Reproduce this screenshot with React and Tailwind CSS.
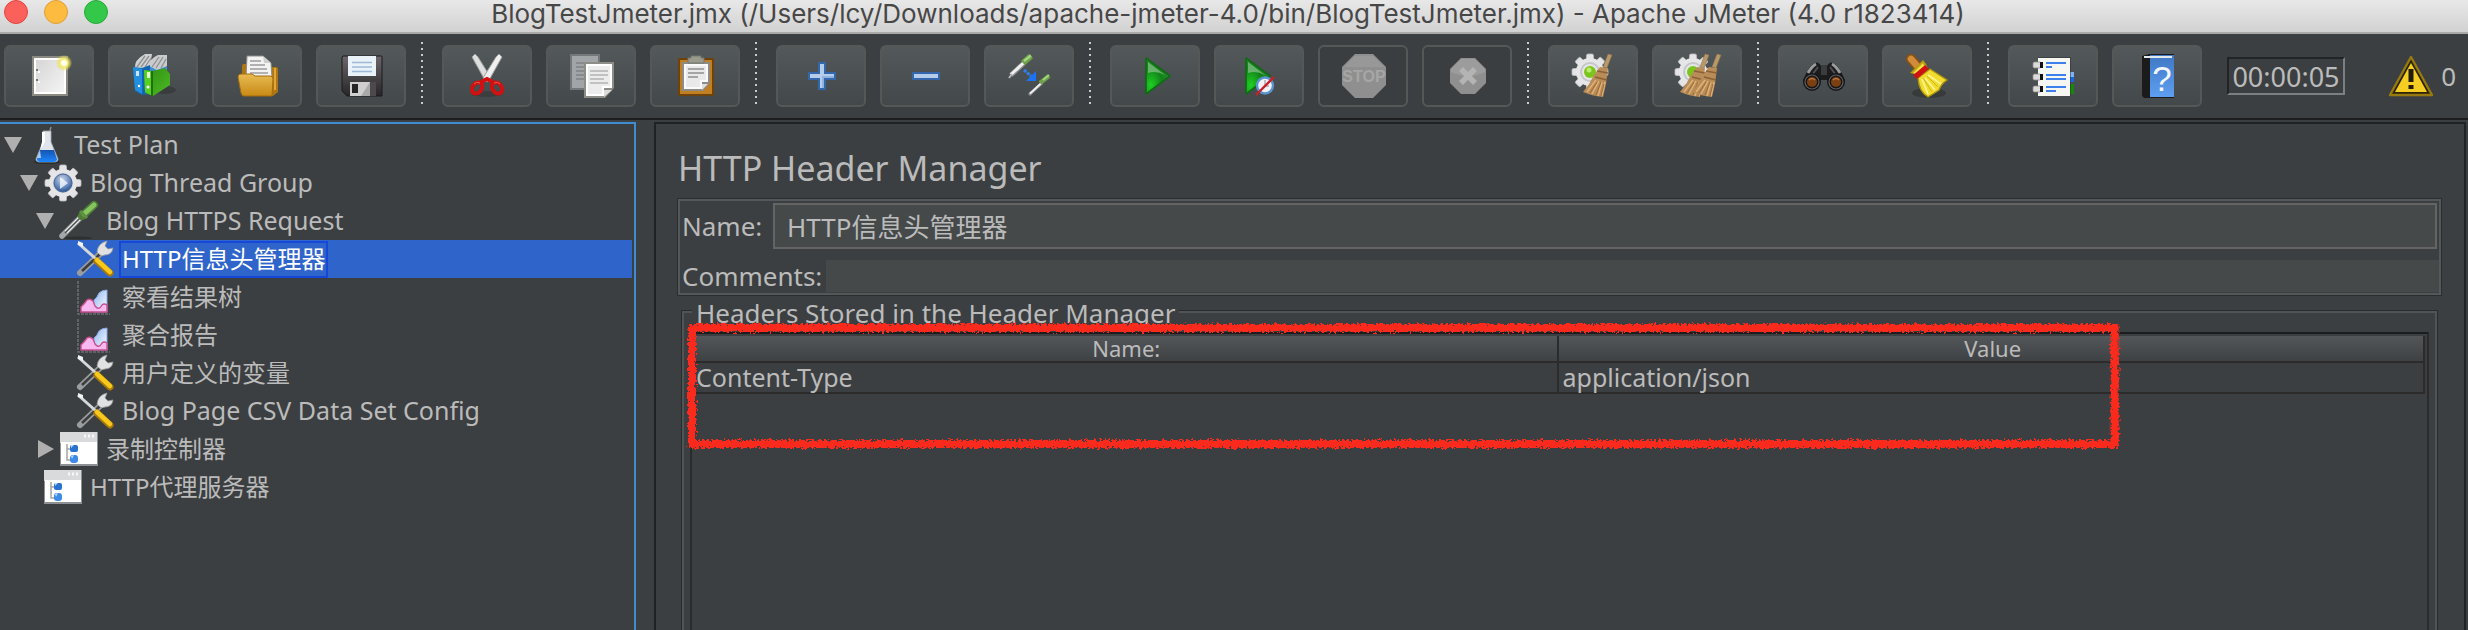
import React from "react";

const uiFont = "font-['Noto_Sans','Noto_Sans_CJK_SC',sans-serif]";

/* ---------- shared drawing parts ---------- */

function Icon({ children, size = "size-11", box = "0 0 44 44" }) {
  return (
    <svg viewBox={box} className={`${size} shrink-0 overflow-visible`} aria-hidden="true">
      {children}
    </svg>
  );
}

function Gear({ cx, cy, r }) {
  const teeth = [0, 45, 90, 135, 180, 225, 270, 315];
  return (
    <g transform={`translate(${cx} ${cy}) scale(${r / 18})`}>
      {teeth.map((a) => (
        <rect key={a} x="-3.5" y="-18" width="7" height="10" rx="1.5" fill="#e4e4e6" stroke="#bcbec0" strokeWidth="0.8" transform={`rotate(${a})`} />
      ))}
      <circle r="14" fill="#e6e6e8" />
      <circle r="9" fill="none" stroke="#c4c6c8" strokeWidth="2" />
    </g>
  );
}

function StrawBroom({ x }) {
  return (
    <g transform={`translate(${x} 0)`}>
      <path d="M38 0 L42 1 L37 14 L33 13 Z" fill="#b8996b" stroke="#8d7148" strokeWidth="0.6" />
      <path d="M30 13 L38 14 L36 30 L33 43 Q22 42 13 38 Q20 30 24 21 Z" fill="#b98c58" />
      <path d="M27 17 L38 19 M25 23 L37 26" stroke="#8a6236" strokeWidth="1.4" />
      <path d="M26 26 L17 38 M29 27 L22 40 M32 28 L28 42 M35 28 L32 42" stroke="#e0b377" strokeWidth="1.4" />
      <path d="M27 28 L20 39 M31 28 L26 41 M34 30 L31 42" stroke="#99693a" strokeWidth="0.9" />
    </g>
  );
}

function PlayShape({ x }) {
  return (
    <g transform={`translate(${x} 0)`}>
      <path d="M0 4 L24 22 L0 40 Z" fill="url(#play)" stroke="#116a14" strokeWidth="1.6" strokeLinejoin="round" />
      <path d="M2 8 L19 21 Q10 16 2 19 Z" fill="#8cc48e" opacity="0.7" />
    </g>
  );
}

function Defs() {
  return (
    <svg className="absolute size-0" aria-hidden="true">
      <defs>
        <linearGradient id="paper" x1="0" y1="0" x2="1" y2="1">
          <stop offset="0" stopColor="#d6d6d6" />
          <stop offset="1" stopColor="#f4f4f4" />
        </linearGradient>
        <linearGradient id="folder" x1="0" y1="0" x2="0" y2="1">
          <stop offset="0" stopColor="#e8bb54" />
          <stop offset="1" stopColor="#c88a14" />
        </linearGradient>
        <linearGradient id="floppy" x1="0" y1="0" x2="0" y2="1">
          <stop offset="0" stopColor="#6b676a" />
          <stop offset="1" stopColor="#272527" />
        </linearGradient>
        <radialGradient id="play" cx="0.2" cy="0.75" r="0.8">
          <stop offset="0" stopColor="#1fd023" />
          <stop offset="0.6" stopColor="#12821a" />
          <stop offset="1" stopColor="#2a8a2e" />
        </radialGradient>
        <linearGradient id="greenBook" x1="0" y1="0" x2="1" y2="1">
          <stop offset="0" stopColor="#2c8d12" />
          <stop offset="1" stopColor="#4fbb24" />
        </linearGradient>
        <linearGradient id="helpBook" x1="0" y1="0" x2="0" y2="1">
          <stop offset="0" stopColor="#3f78c4" />
          <stop offset="1" stopColor="#5e9ef0" />
        </linearGradient>
        <radialGradient id="glow">
          <stop offset="0" stopColor="#fffde0" />
          <stop offset="0.5" stopColor="#f3ea70" />
          <stop offset="1" stopColor="#e8dc40" stopOpacity="0.1" />
        </radialGradient>
        <linearGradient id="water" x1="0" y1="0" x2="0" y2="1">
          <stop offset="0" stopColor="#1554b0" />
          <stop offset="1" stopColor="#1f86ff" />
        </linearGradient>
        <radialGradient id="orb" cx="0.45" cy="0.3" r="0.8">
          <stop offset="0" stopColor="#c9d4e6" />
          <stop offset="0.6" stopColor="#5f82b8" />
          <stop offset="1" stopColor="#16407f" />
        </radialGradient>
        <linearGradient id="peak" x1="0" y1="0" x2="1" y2="1">
          <stop offset="0" stopColor="#8fb6f0" />
          <stop offset="1" stopColor="#ffffff" />
        </linearGradient>
        <filter id="rough" x="-2%" y="-10%" width="104%" height="120%" filterUnits="objectBoundingBox">
          <feTurbulence type="fractalNoise" baseFrequency="0.4" numOctaves="2" seed="4" result="n" />
          <feDisplacementMap in="SourceGraphic" in2="n" scale="7" xChannelSelector="R" yChannelSelector="G" />
        </filter>
      </defs>
    </svg>
  );
}

/* ---------- toolbar icons ---------- */

const NewIcon = () => (
  <Icon>
    <rect x="5" y="2" width="36" height="40" fill="#8b8b82" />
    <rect x="7" y="4" width="32" height="36" fill="#fff" />
    <rect x="9" y="6" width="28" height="32" fill="url(#paper)" />
    <path d="M9 15h2v2h-2zM9 25h2v2h-2z" fill="#777" />
    <path d="M11 17h2v2h-2zM11 27h2v2h-2z" fill="#fff" />
    <circle cx="37" cy="9" r="8" fill="url(#glow)" />
    <circle cx="37" cy="9" r="3" fill="#fffef0" />
  </Icon>
);

const TemplatesIcon = () => (
  <Icon>
    <ellipse cx="34" cy="36" rx="11" ry="4" fill="#222" opacity="0.35" />
    <path d="M17 12 L36 8 L36 18 L18 22 Z" fill="#3d8fd0" />
    <path d="M4 14 Q3 6 14 0 H21 L19 12 L6 16 Z" fill="#cfd1d2" />
    <path d="M18 12 Q18 5 27 1 H36 V12 L26 16 Z" fill="#c9cbcd" />
    <path d="M6 13 L14 2 M10 13 L18 2 M14 13 L20 4 M21 13 L28 3 M25 14 L32 3 M30 14 L35 5" stroke="#8e9193" strokeWidth="1.3" />
    <path d="M2 13 L11 14 L19 11 L19 40 L11 41 L4 37 Z" fill="#1166b4" />
    <path d="M2 13 L11 15 L11 40 L4 36 Z" fill="#2490dd" />
    <path d="M5 17h3v5h-3z" fill="#cbe6fb" />
    <path d="M13 16 L22 17 L34 14 L39 20 V31 L22 42 L14 39 Z" fill="url(#greenBook)" />
    <path d="M13 16 L20 17 L20 41 L14 38 Z" fill="#58cf24" />
    <path d="M16 18h3v6h-3z" fill="#e4ffd2" />
    <circle cx="17" cy="33" r="1.500" fill="#fff" />
    <circle cx="8" cy="32" r="1.200" fill="#fff" />
    <path d="M21 17 V42" stroke="#1c6d0b" strokeWidth="1.800" />
  </Icon>
);

const OpenIcon = () => (
  <Icon>
    <path d="M7 12 Q7 10 9 10 H17 L20 13 H41 Q43 13 43 15 L43 38 L38 42 H7 Z" fill="#b07612" />
    <path d="M40 14 V36" stroke="#e0a63a" strokeWidth="2" />
    <path d="M12 2 H28 L36 9 L37 24 H11 Z" fill="#f3f3f3" stroke="#8d8d85" strokeWidth="1" />
    <path d="M15 7 H26 M15 11 H30 M15 15 H32 M15 19 H33" stroke="#9c9c9c" strokeWidth="1.5" />
    <path d="M28 2 L29 9 L36 9 Z" fill="#cfcfcf" />
    <path d="M3 23 Q3 20 6 20 H17 L20 22 H35 Q38 22 38 25 L37 42 H9 Q7 42 6 39 Z" fill="url(#folder)" stroke="#a46c0c" strokeWidth="1" />
  </Icon>
);

const SaveIcon = () => (
  <Icon>
    <path d="M4 2 H42 Q43 2 43 3 V42 H8 L3 37 V3 Z" fill="url(#floppy)" stroke="#1c1a1c" strokeWidth="1" />
    <rect x="9" y="2" width="28" height="20" fill="#e9f1f9" />
    <path d="M13 8.500 H33 M13 13 H33 M13 17.500 H33" stroke="#9db9d6" strokeWidth="1.6" />
    <rect x="11" y="28" width="20" height="14" fill="#cfcfcf" />
    <rect x="31" y="28" width="6" height="14" fill="#4b494b" />
    <rect x="13" y="30" width="6" height="9" fill="#262426" />
    <path d="M22 42 L31 28 V42 Z" fill="#a9a9a9" />
  </Icon>
);

const CutIcon = () => (
  <Icon>
    <ellipse cx="22" cy="40" rx="15" ry="3" fill="#222" opacity="0.3" />
    <path d="M7 3 L10 0 L13 3 L26 24 L21 28 Z" fill="#dcdedf" stroke="#9fa09b" strokeWidth="1" />
    <path d="M37 3 L34 0 L31 3 L18 24 L23 28 Z" fill="#efefef" stroke="#9fa09b" strokeWidth="1" />
    <ellipse cx="12" cy="34" rx="4.500" ry="6" fill="none" stroke="#d40f0f" strokeWidth="4" transform="rotate(35 12 34)" />
    <ellipse cx="32" cy="34" rx="4.500" ry="6" fill="none" stroke="#d40f0f" strokeWidth="4" transform="rotate(-35 32 34)" />
    <path d="M16 28 L22 25 L28 28" fill="none" stroke="#d40f0f" strokeWidth="4" />
    <path d="M9 30 Q11 27 15 29 M35 30 Q33 27 29 29" fill="none" stroke="#f05a50" strokeWidth="1" />
  </Icon>
);

const CopyIcon = () => (
  <Icon>
    <rect x="1" y="0" width="30" height="36" fill="#74787a" />
    <rect x="3" y="2" width="26" height="32" fill="#a2a5a7" />
    <path d="M7 9 H20 M7 13 H20 M7 17 H15 M7 21 H15 M7 25 H15" stroke="#7f8385" strokeWidth="1.4" />
    <path d="M15 8 H45 V34 L36 44 H15 Z" fill="#8d8d87" />
    <path d="M17 10 H43 V34 H35 V42 H17 Z" fill="#fff" />
    <path d="M19 12 H41 V32 H33 V40 H19 Z" fill="#ececec" />
    <path d="M35 36 H43 L35 43 Z" fill="#dcdcdc" />
    <path d="M21 17 H39 M21 21 H39 M21 25 H35 M21 29 H39" stroke="#b3b3b3" strokeWidth="1.6" />
  </Icon>
);

const PasteIcon = () => (
  <Icon>
    <rect x="5" y="4" width="36" height="38" rx="1" fill="#6e420b" />
    <rect x="7" y="6" width="32" height="34" fill="#c07f22" />
    <path d="M9 8 H37 V29 L30 37 H9 Z" fill="#8d8d87" />
    <path d="M11 10 H35 V28 H29 V35 H11 Z" fill="#fafafa" />
    <path d="M13 12 H33 V26 H27 V33 H13 Z" fill="#e9e9e9" />
    <path d="M29 30 H35 L29 36 Z" fill="#dedede" />
    <path d="M15 15 H31 M15 19 H31 M15 23 H25" stroke="#8f8f8f" strokeWidth="1.6" />
    <path d="M18 2 H28 V4 H31 V9 H15 V4 H18 Z" fill="#9a9b8e" stroke="#77786c" strokeWidth="1" />
  </Icon>
);

const PlusIcon = () => (
  <Icon>
    <path d="M19 8 H27 V18 H37 V26 H27 V36 H19 V26 H9 V18 H19 Z" fill="#3366ab" />
    <path d="M21 10 H25 V20 H35 V24 H25 V34 H21 V24 H11 V20 H21 Z" fill="#b3cdea" />
    <path d="M23 22 H35 V24 H25 V34 H23 Z" fill="#8fb3dd" />
  </Icon>
);

const MinusIcon = () => (
  <Icon>
    <rect x="9" y="18" width="28" height="8" fill="#3366ab" />
    <rect x="11" y="20" width="24" height="4" fill="#b3cdea" />
  </Icon>
);

const ToggleIcon = () => (
  <Icon>
    <path d="M4 21 L17 9" stroke="#8d9091" strokeWidth="5" />
    <path d="M4 20.500 L17 8.500" stroke="#efefef" strokeWidth="3" />
    <path d="M16 9 L24 2" stroke="#6ea04c" strokeWidth="6" />
    <path d="M17 7 L24 1.500" stroke="#a3d67c" strokeWidth="2.500" />
    <path d="M2 24 L5 20" stroke="#b5b7b8" strokeWidth="2" />
    <path d="M17 16 L24 22" stroke="#2f7ff0" strokeWidth="3" strokeDasharray="3 1" />
    <path d="M29 17 L29 27 L19 27 Z" fill="#1b72f2" />
    <path d="M22 41 L35 29" stroke="#8d9091" strokeWidth="3" />
    <path d="M23 39.500 L35 28.500" stroke="#efefef" strokeWidth="2" />
    <path d="M33 29 L42 22" stroke="#6ea04c" strokeWidth="4.500" />
    <path d="M36 26 L42 21" stroke="#a3d67c" strokeWidth="2" />
  </Icon>
);

const StartIcon = () => (
  <Icon>
    <PlayShape x={13} />
  </Icon>
);

const StartNoPauseIcon = () => (
  <Icon>
    <PlayShape x={9} />
    <circle cx="28" cy="31.500" r="8" fill="#f1f3f6" stroke="#5b93cf" strokeWidth="2.400" />
    <path d="M28 26 V32 H32" fill="none" stroke="#a9b0b8" strokeWidth="1.500" />
    <path d="M19 41 L37 23" stroke="#c9202a" strokeWidth="2.400" />
  </Icon>
);

const StopIcon = () => (
  <Icon>
    <path d="M14 0 H32 L45 13 V31 L32 44 H14 L1 31 V13 Z" fill="#8f8f8f" />
    <path d="M14 2 H32 L43 13 H3 Z" fill="#989898" />
    <text x="23" y="28" textAnchor="middle" fontFamily="Liberation Sans Narrow, Liberation Sans" fontWeight="bold" fontSize="16" fill="#a6a6a6">STOP</text>
  </Icon>
);

const ShutdownIcon = () => (
  <Icon>
    <path d="M16 4 H30 L41 15 V29 L30 40 H16 L5 29 V15 Z" fill="#8f8f8f" />
    <path d="M16 5 H30 L40 15 V18 Q23 26 6 18 V15 Z" fill="#9c9c9c" />
    <path d="M16 15 L30 29 M30 15 L16 29" stroke="#b4b4b4" strokeWidth="5.500" />
  </Icon>
);

const ClearIcon = () => (
  <Icon>
    <Gear cx={19} cy={18} r={18} />
    <circle cx="19" cy="18" r="6" fill="#7cc51e" />
    <circle cx="18" cy="16" r="2.500" fill="#b9ec6a" />
    <StrawBroom x={-1} />
  </Icon>
);

const ClearAllIcon = () => (
  <Icon>
    <Gear cx={18} cy={18} r={18} />
    <circle cx="18" cy="18" r="6" fill="#7cc51e" />
    <StrawBroom x={-8} />
    <StrawBroom x={4} />
  </Icon>
);

const SearchIcon = () => (
  <Icon>
    <path d="M2 27 Q6 15 12 10 Q17 6 20 12 H26 Q29 6 34 10 Q40 15 44 27 L36 36 L27 26 H19 L10 36 Z" fill="#1c1c1d" />
    <path d="M7 19 Q11 12 15 10 M39 19 Q35 12 31 10" stroke="#9a9b9c" strokeWidth="3" fill="none" />
    <path d="M11 21 L17 13 M35 21 L29 13" stroke="#4f5052" strokeWidth="2" />
    <rect x="20" y="11" width="6" height="10" fill="#3b3c3d" />
    <circle cx="11" cy="28" r="9" fill="#161617" />
    <circle cx="35" cy="28" r="9" fill="#161617" />
    <circle cx="11" cy="28" r="7" fill="none" stroke="#5e5f61" strokeWidth="1.200" />
    <circle cx="35" cy="28" r="7" fill="none" stroke="#5e5f61" strokeWidth="1.200" />
    <circle cx="11" cy="28" r="5" fill="#7c3f10" />
    <circle cx="35" cy="28" r="5" fill="#7c3f10" />
    <path d="M8 26 Q11 23 14 26 M32 26 Q35 23 38 26" stroke="#b8743c" strokeWidth="1.600" fill="none" />
  </Icon>
);

const ResetSearchIcon = () => (
  <Icon>
    <ellipse cx="24" cy="39" rx="17" ry="5" fill="#222" opacity="0.4" />
    <path d="M6 5 L14 14" stroke="#8a5210" strokeWidth="10" strokeLinecap="round" />
    <path d="M6 5 L14 14" stroke="#d08c3a" strokeWidth="6.500" strokeLinecap="round" />
    <path d="M5 19 L18 6 L21 10 L23 15 L14 24 L9 20 Z" fill="#b99f10" />
    <path d="M8 19 L18 9 L20 14 L13 20 Z" fill="#f0dc3c" />
    <path d="M13 24 L25 15 L42 26 Q36 30 34 36 L23 43 Q14 38 13 24 Z" fill="#f1dc2f" stroke="#a8920e" strokeWidth="1.400" />
    <path d="M17 25 L23 40 M20 24 L30 36 M23 21 L36 30" stroke="#fff58a" strokeWidth="1.800" />
    <path d="M18 24 L27 38 M22 22 L33 33" stroke="#c9ae14" strokeWidth="0.900" />
    <path d="M10 23 L22 13" stroke="#cf1111" strokeWidth="5.500" />
  </Icon>
);

const LogIcon = () => (
  <Icon>
    <rect x="38" y="18" width="5" height="5" fill="#7fb2f5" />
    <rect x="38" y="23" width="5" height="5" fill="#1b67e0" />
    <rect x="38" y="30" width="5" height="10" fill="#16860f" />
    <rect x="7" y="3" width="33" height="39" fill="#2b2b2b" opacity="0.5" />
    <rect x="7" y="4" width="32" height="38" fill="#f6f6f2" />
    <path d="M15 9 H35 M15 13 H21 M15 21 H35 M15 25 H35 M15 33 H35 M15 37 H25" stroke="#3d7fec" strokeWidth="2" />
    {[11, 23, 35].map((y) => (
      <g key={y}>
        <rect x="2" y={y - 3} width="8" height="6" rx="1.500" fill="#dcdada" stroke="#8d8b8b" strokeWidth="0.800" />
        <rect x="9" y={y - 3} width="3" height="6" fill="#111" />
      </g>
    ))}
  </Icon>
);

const HelpIcon = () => (
  <Icon>
    <path d="M7 2 L14 0 H39 V44 H9 L7 42 Z" fill="#1b1b1c" />
    <rect x="15" y="1" width="24" height="42" fill="url(#helpBook)" />
    <path d="M9 3 H37" stroke="#e3e8ee" strokeWidth="2" />
    <text x="27" y="37" textAnchor="middle" fontFamily="Liberation Sans" fontSize="35" fill="#f2f6fb">?</text>
  </Icon>
);

const WarningIcon = () => (
  <Icon>
    <path d="M22 3 L43 41 H1 Z" fill="#2b2406" stroke="#96790f" strokeWidth="2.400" strokeLinejoin="round" />
    <path d="M22 9 L38 38 H6 Z" fill="#f6cd22" />
    <path d="M19.500 15 H24.500 V28 H19.500 Z" fill="#211c0c" />
    <rect x="19.500" y="31" width="5" height="4" fill="#211c0c" />
  </Icon>
);

/* ---------- tree icons ---------- */

const FlaskIcon = () => (
  <Icon size="size-[38px]" box="0 0 38 38">
    <ellipse cx="19" cy="36" rx="13" ry="2" fill="#1d1f20" opacity="0.6" />
    <path d="M23 1 L21 8" stroke="#8d9091" strokeWidth="1.400" />
    <path d="M15 5 H23 V16 L30 33 Q30 36 27 36 H11 Q8 36 8 33 L15 16 Z" fill="#dfe5ea" stroke="#9fa8ad" strokeWidth="0.800" />
    <path d="M14 6 H17 V16 L12 24 L14 16 Z" fill="#fff" />
    <path d="M12 24 H26 L29 33 Q29 36 26 36 H12 Q9 36 9 33 Z" fill="url(#water)" />
    <path d="M12 24 L9 32 L13 32 Z" fill="#a9cdf8" />
  </Icon>
);

const ThreadIcon = () => (
  <Icon size="size-[38px]" box="0 0 38 38">
    <Gear cx={19} cy={19} r={18} />
    <circle cx="19" cy="19" r="9" fill="url(#orb)" stroke="#45659a" strokeWidth="1" />
    <path d="M16 13 L24 19 L16 25 Z" fill="#f5f8fc" opacity="0.8" />
  </Icon>
);

const DropperIcon = () => (
  <Icon size="size-[38px]" box="0 0 38 38">
    <ellipse cx="18" cy="36" rx="14" ry="1.500" fill="#1d1f20" opacity="0.5" />
    <path d="M2 34 L23 13" stroke="#a4a7a8" strokeWidth="5.500" strokeLinecap="round" />
    <path d="M6 30 L24 12" stroke="#f3f3f3" strokeWidth="3.500" />
    <path d="M5 31 L20 16" stroke="#4b4f51" strokeWidth="1.600" />
    <path d="M22 14 L34 3" stroke="#4d7d36" strokeWidth="8" strokeLinecap="round" />
    <path d="M24 12 L34 3" stroke="#86c45f" strokeWidth="5" strokeLinecap="round" />
    <path d="M20 9 L27 16" stroke="#5d8f41" strokeWidth="3" />
  </Icon>
);

const ToolsIcon = () => (
  <Icon size="size-[38px]" box="0 0 38 38">
    <path d="M4 33 L27 11" stroke="#9a9c9d" strokeWidth="6" strokeLinecap="round" />
    <path d="M6 31 L24 14" stroke="#3b3d3e" strokeWidth="2.500" />
    <path d="M21 12 Q22 3 31 1 L29 6 L32 9 L37 8 Q36 15 29 15 Q25 17 23 14 Z" fill="#dfe1e2" stroke="#97999a" strokeWidth="0.800" />
    <path d="M2 3 L20 19" stroke="#d5d7d8" strokeWidth="3" />
    <path d="M2 1 L7 3 L7 7 L2 5 Z" fill="#f2f2f2" />
    <path d="M21 21 L34 33" stroke="#a87a0a" strokeWidth="7" strokeLinecap="round" />
    <path d="M21 20 L34 32" stroke="#f8c91c" strokeWidth="4.500" strokeLinecap="round" />
  </Icon>
);

const ChartIcon = () => (
  <Icon size="size-[38px]" box="0 0 38 38">
    <path d="M2 3 V36 H34" fill="none" stroke="#6a6d6f" strokeWidth="1.600" strokeDasharray="3 1" />
    <path d="M18 34 V22 Q21 20 23 15 Q26 12 31 12 V34 Z" fill="url(#peak)" stroke="#86a6e6" strokeWidth="1" />
    <path d="M5 34 V29 Q9 25 11 22 Q14 20 17 23 L19 28 Q23 33 26 27 Q28 25 31 27 V34 Z" fill="#f9b9f0" stroke="#c8508e" strokeWidth="1.400" />
  </Icon>
);

const WindowIcon = () => (
  <Icon size="size-[38px]" box="0 0 38 38">
    <rect x="0" y="2" width="38" height="34" fill="#8d9094" />
    <rect x="0" y="2" width="37" height="11" fill="#d9dadc" />
    <path d="M24 6 H26 M28 6 H30 M32 6 H34" stroke="#f7f7f7" strokeWidth="3" />
    <rect x="1" y="12" width="36" height="22" fill="#fff" />
    <path d="M7 14 V30 H12 M7 19 H12" fill="none" stroke="#a3a5a8" strokeWidth="1.500" />
    <rect x="10" y="15" width="8" height="7" rx="2" fill="#2a72cf" />
    <rect x="10" y="25" width="8" height="8" rx="3" fill="#3d8be8" />
    <path d="M11 15 L14 15 L11 18 Z M11 26 L14 25 L12 29 Z" fill="#b8dafc" />
  </Icon>
);

/* ---------- toolbar ---------- */

const toolGroups = [
  [["New", NewIcon], ["Templates", TemplatesIcon], ["Open", OpenIcon], ["Save", SaveIcon]],
  [["Cut", CutIcon], ["Copy", CopyIcon], ["Paste", PasteIcon]],
  [["Expand all", PlusIcon], ["Collapse all", MinusIcon], ["Toggle", ToggleIcon]],
  [["Start", StartIcon], ["Start no pauses", StartNoPauseIcon], ["Stop", StopIcon, true], ["Shutdown", ShutdownIcon, true]],
  [["Clear", ClearIcon], ["Clear all", ClearAllIcon]],
  [["Search", SearchIcon], ["Reset search", ResetSearchIcon]],
  [["Function helper", LogIcon], ["Help", HelpIcon]],
];

function ToolButton({ label, Glyph, disabled }) {
  return (
    <button
      type="button"
      aria-label={label}
      disabled={disabled}
      className="flex h-[62px] w-[90px] shrink-0 items-center justify-center rounded-md border-2 border-[#565757] bg-linear-to-b from-[#53585a] to-[#43484a] disabled:from-[#3b3e40] disabled:to-[#3b3e40]"
    >
      <Glyph />
    </button>
  );
}

function Toolbar() {
  return (
    <div role="toolbar" aria-label="Main" className="flex h-[86px] shrink-0 items-center border-b-2 border-[#1b1d1f] bg-[#3c3f41] pl-1">
      {toolGroups.map((group, g) => (
        <React.Fragment key={g}>
          {g > 0 && (
            <span className="mt-2 mr-[19px] ml-[15px] h-[62px] w-0.5 shrink-0 self-start bg-[repeating-linear-gradient(to_bottom,#c9cbcc_0px,#c9cbcc_2px,transparent_2px,transparent_6px)]" />
          )}
          <div className="flex gap-3.5">
            {group.map(([label, Glyph, disabled]) => (
              <ToolButton key={label} label={label} Glyph={Glyph} disabled={disabled} />
            ))}
          </div>
        </React.Fragment>
      ))}
      <output className="ml-[25px] flex h-[38px] w-[118px] shrink-0 items-center justify-center border-2 border-t-[#212324] border-r-[#7b8083] border-b-[#7b8083] border-l-[#212324] text-[27px] leading-none">
        00:00:05
      </output>
      <div className="ml-auto flex shrink-0 items-center gap-2 pr-3 text-[26px] leading-none">
        <WarningIcon />
        <span>0</span>
      </div>
    </div>
  );
}

/* ---------- tree ---------- */

const treeRows = [
  { level: 0, label: "Test Plan", Glyph: FlaskIcon, arrow: "open" },
  { level: 1, label: "Blog Thread Group", Glyph: ThreadIcon, arrow: "open" },
  { level: 2, label: "Blog HTTPS Request", Glyph: DropperIcon, arrow: "open" },
  { level: 3, label: "HTTP信息头管理器", Glyph: ToolsIcon, selected: true, cjk: true },
  { level: 3, label: "察看结果树", Glyph: ChartIcon, cjk: true },
  { level: 3, label: "聚合报告", Glyph: ChartIcon, cjk: true },
  { level: 3, label: "用户定义的变量", Glyph: ToolsIcon, cjk: true },
  { level: 3, label: "Blog Page CSV Data Set Config", Glyph: ToolsIcon },
  { level: 2, label: "录制控制器", Glyph: WindowIcon, arrow: "closed", cjk: true },
  { level: 1, label: "HTTP代理服务器", Glyph: WindowIcon, cjk: true },
];

const indents = ["pl-1", "pl-5", "pl-9", "pl-[52px]"];

function TreeRow({ level, label, Glyph, arrow, selected, cjk }) {
  return (
    <li
      role="treeitem"
      aria-level={level + 1}
      aria-selected={!!selected}
      className={`flex h-[38px] items-center ${indents[level]} ${selected ? "bg-[#2f65ca] text-white" : ""}`}
    >
      <span className="flex w-6 shrink-0 items-center">
        {arrow && (
          <button type="button" aria-label={`Toggle ${label}`} className="flex">
            <svg viewBox="0 0 18 18" className="size-[18px]" aria-hidden="true">
              <path d={arrow === "open" ? "M0 1 H18 L9 17 Z" : "M2 0 L18 9 L2 18 Z"} fill="#afafaf" />
            </svg>
          </button>
        )}
      </span>
      <Glyph />
      <span
        className={`ml-[5px] flex h-[37px] items-center border-2 px-px whitespace-nowrap ${cjk ? "text-[24px]" : "text-[25px]"} ${selected ? "border-[#1548d8]" : "border-transparent"}`}
      >
        {label}
      </span>
    </li>
  );
}

/* ---------- main panel ---------- */

function NamePanel() {
  return (
    <div className="flex flex-col gap-[11px] border-2 border-[#55585b] pt-0.5 pb-px pl-0.5 outline-1 outline-[#2b2d2f]">
      <div className="flex items-center">
        <label htmlFor="name" className="w-[91px] shrink-0 text-[26px] leading-8">Name:</label>
        <input
          id="name"
          defaultValue="HTTP信息头管理器"
          className="mr-0.5 h-[46px] min-w-0 flex-1 border-2 border-[#646464] bg-[#45494a] px-3 text-[26px] outline-none"
        />
      </div>
      <div className="flex items-center">
        <label htmlFor="comments" className="shrink-0 pr-1 text-[26px] leading-8">Comments:</label>
        <input id="comments" className="h-8 min-w-0 flex-1 bg-[#45494a] px-1 text-[26px] outline-none" />
      </div>
    </div>
  );
}

function HeadersTable() {
  return (
    <table className="w-full table-fixed border-separate border-spacing-0 text-left">
      <thead>
        <tr className="h-[27px] bg-linear-to-b from-[#53575a] to-[#3d4042] text-[22px] leading-[25px]">
          <th scope="col" className="border-r-2 border-b-2 border-[#2b2b2b] p-0 pl-1 text-center font-normal">Name:</th>
          <th scope="col" className="border-r-2 border-b-2 border-[#2b2b2b] p-0 pl-1 text-center font-normal">Value</th>
        </tr>
      </thead>
      <tbody>
        <tr className="text-[25px] leading-[29px]">
          <td className="border-r-2 border-b-2 border-[#2b2b2b] p-0 pl-1">Content-Type</td>
          <td className="border-r-2 border-b-2 border-[#2b2b2b] p-0 pl-1">application/json</td>
        </tr>
      </tbody>
    </table>
  );
}

function RedMarker() {
  return (
    <svg className="pointer-events-none absolute -top-1.5 left-0 h-[116px] w-[82%] overflow-visible" aria-hidden="true">
      <rect width="100%" height="100%" fill="none" stroke="#fc2a1c" strokeWidth="8" filter="url(#rough)" />
    </svg>
  );
}

export default function App() {
  return (
    <div className={`flex h-screen flex-col overflow-hidden bg-[#3c3f41] text-[#bbbbbb] ${uiFont}`}>
      <Defs />
      <header className="relative flex h-[34px] shrink-0 items-start justify-center border-b-2 border-[#a9a9a9] bg-linear-to-b from-[#e8e8e8] to-[#d2d2d2]">
        <div className="absolute top-0 left-1 flex gap-4">
          <button type="button" aria-label="Close" className="size-6 rounded-full border border-[#e2463f] bg-[#fc605b]" />
          <button type="button" aria-label="Minimize" className="size-6 rounded-full border border-[#de9f34] bg-[#fdbc40]" />
          <button type="button" aria-label="Zoom" className="size-6 rounded-full border border-[#27a93a] bg-[#34c84a]" />
        </div>
        <h1 className="pr-3 font-['Inter',sans-serif] text-[26px] leading-7 whitespace-nowrap text-[#474747]">
          BlogTestJmeter.jmx (/Users/lcy/Downloads/apache-jmeter-4.0/bin/BlogTestJmeter.jmx) - Apache JMeter (4.0 r1823414)
        </h1>
      </header>
      <Toolbar />
      <div className="flex min-h-0 flex-1 pt-0.5 pr-0.5">
        <nav aria-label="Test plan" className="w-[636px] shrink-0 border-t-2 border-r-2 border-[#3f8cd1] pt-0.5 pr-0.5">
          <ul role="tree">
            {treeRows.map((row) => (
              <TreeRow key={row.label} {...row} />
            ))}
          </ul>
        </nav>
        <main className="ml-[18px] flex min-w-0 flex-1 flex-col border-2 border-b-0 border-[#1f2123] pr-[23px] pl-[22px]">
          <h2 className="mt-5 mb-[7px] text-[34px] leading-[48px]">HTTP Header Manager</h2>
          <NamePanel />
          <section className="relative mt-4 mr-1 ml-1 flex flex-1 flex-col border-2 border-b-0 border-[#515456] px-1.5 pt-[19px] outline-1 outline-[#2b2b2b]">
            <h3 className="absolute -top-4 left-2 bg-[#3c3f41] px-1 text-[26px] leading-8">Headers Stored in the Header Manager</h3>
            <div className="relative flex-1 border-2 border-b-0 border-t-[#1b1d1f] border-r-[#2b2b2b] border-l-[#2b2b2b] pt-0.5 pr-0.5">
              <HeadersTable />
              <RedMarker />
            </div>
          </section>
        </main>
      </div>
    </div>
  );
}
